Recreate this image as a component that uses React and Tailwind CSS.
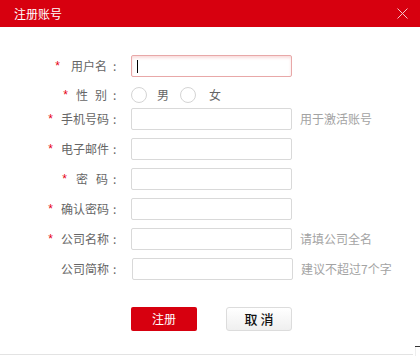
import React from "react";

const F = { fontFamily: '"Noto Sans CJK SC", "Microsoft YaHei", sans-serif' };

function Star({ mr = "mr-[8px]" }) {
  return <span className={`text-[#e60012] text-[12px] leading-none ${mr}`} style={{ fontFamily: '"Liberation Sans", sans-serif' }}>*</span>;
}

function Label({ star = true, mr, tmr = "", children }) {
  return (
    <div className="w-[121px] flex justify-end items-center text-[12px] text-[#666]">
      {star && <Star mr={mr} />}
      <span className={tmr}>{children}</span>
      <span className="w-[12px] pl-[4px]">:</span>
    </div>
  );
}

function Input({ focus = false }) {
  return focus ? (
    <div className="ml-[10px] w-[161px] h-[22px] border border-[#e8a8a8] rounded-[2px] bg-white shadow-[inset_0_2px_3px_rgba(232,120,120,0.25)] flex items-center pl-[5px]">
      <div className="w-px h-[13px] bg-black" />
    </div>
  ) : (
    <div className="ml-[10px] w-[161px] h-[22px] border border-[#d9d9d9] rounded-[2px] bg-white" />
  );
}

function Hint({ children }) {
  return <span className="ml-[8px] text-[12px] text-[#a3a3a3]">{children}</span>;
}

export default function App() {
  return (
    <div className="w-[420px] h-[356px] bg-white relative overflow-hidden" style={F}>
      <div className="h-[27px] bg-[#d7000f] flex items-center justify-between pl-[14px] pr-[12px]">
        <span className="text-white text-[12px]">注册账号</span>
        <svg width="11" height="11" viewBox="0 0 11 11" className="mb-px">
          <path d="M0.5 0.5 L10.5 10.5 M10.5 0.5 L0.5 10.5" stroke="#f6c4c8" strokeWidth="1" />
        </svg>
      </div>

      <div className="pt-[28px] flex flex-col">
        <div className="flex items-center h-[22px]">
          <Label mr="mr-[11px]" tmr="mr-[2px]">用户名</Label>
          <Input focus />
        </div>
        <div className="flex items-center h-[22px] mt-[7px]">
          <Label mr="mr-[8px]" tmr="mr-[2px]">性<span className="inline-block w-[7px]" />别</Label>
          <div className="ml-[10px] flex items-center text-[12px] text-[#666]">
            <div className="w-[16px] h-[16px] rounded-full border border-[#d4d4d4]" />
            <span className="ml-[10px]">男</span>
            <div className="ml-[11px] w-[16px] h-[16px] rounded-full border border-[#d4d4d4]" />
            <span className="ml-[13px]">女</span>
          </div>
        </div>
        <div className="flex items-center h-[22px] mt-[2px]">
          <Label>手机号码</Label>
          <Input />
          <Hint>用于激活账号</Hint>
        </div>
        <div className="flex items-center h-[22px] mt-[8px]">
          <Label>电子邮件</Label>
          <Input />
        </div>
        <div className="flex items-center h-[22px] mt-[8px]">
          <Label mr="mr-[9px]" tmr="mr-[1px]">密<span className="inline-block w-[8px]" />码</Label>
          <Input />
        </div>
        <div className="flex items-center h-[22px] mt-[8px]">
          <Label>确认密码</Label>
          <Input />
        </div>
        <div className="flex items-center h-[22px] mt-[8px]">
          <Label>公司名称</Label>
          <Input />
          <Hint>请填公司全名</Hint>
        </div>
        <div className="flex items-center h-[22px] mt-[8px]">
          <Label star={false}>公司简称</Label>
          <div className="ml-px flex items-center">
            <Input />
            <Hint>建议不超过7个字</Hint>
          </div>
        </div>
        <div className="flex items-center mt-[27px] pl-[131px]">
          <button className="w-[66px] h-[24px] bg-[#d7000f] text-white text-[12px] rounded-[2px]">注册</button>
          <button className="ml-[29px] w-[66px] h-[24px] border border-[#dcdcdc] rounded-[3px] bg-gradient-to-b from-white to-[#efefef] text-[13px] font-medium text-[#111]">取 消</button>
        </div>
      </div>

      <div className="absolute left-0 top-[354px] w-[413px] h-px bg-[#e3e3e3]" />
      <div className="absolute left-[415px] top-[346px] w-[5px] h-px bg-[#333]" />
      <div className="absolute left-[415px] top-[347px] w-px h-[9px] bg-[#eee]" />
    </div>
  );
}
